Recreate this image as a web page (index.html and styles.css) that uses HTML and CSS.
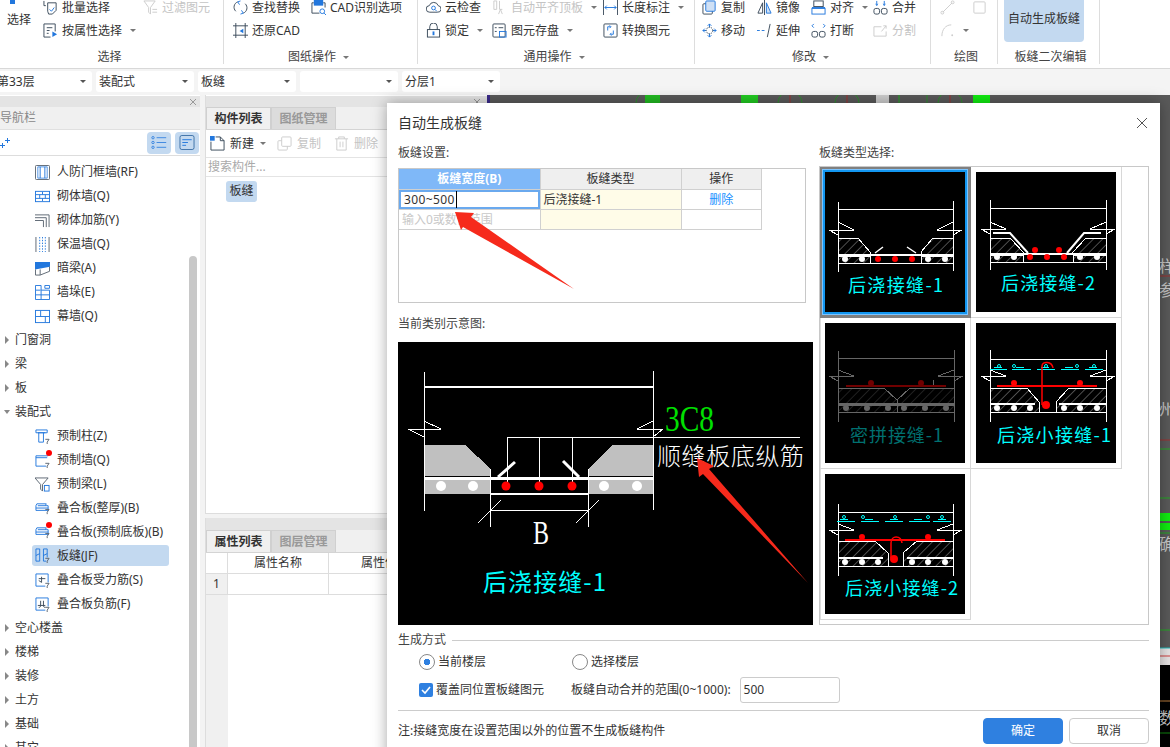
FILE: index.html
```html
<!DOCTYPE html>
<html lang="zh-CN">

<head>
    <meta charset="UTF-8">
    <meta name="viewport" content="width=device-width,initial-scale=1.0">
    <title>自动生成板缝</title>
    <link rel="stylesheet" href="styles.css">
</head>

<body>
    <!-- icon sprite -->
    <svg class="sprite">
        <defs>
            <pattern id="hatch" width="6.500" height="6.500" patternUnits="userSpaceOnUse" patternTransform="rotate(45)">
                <line x1="0" y1="0" x2="0" y2="6.500" stroke="#fff" stroke-width="0.600" />
            </pattern>
            <pattern id="hatch-dim" width="6.500" height="6.500" patternUnits="userSpaceOnUse" patternTransform="rotate(45)">
                <line x1="0" y1="0" x2="0" y2="6.500" stroke="#666" stroke-width="0.600" />
            </pattern>
        </defs>
        <symbol id="i-batch" viewBox="0 0 16 16"><path d="M1 1v5h2M5 3h9v8l-4 4H6l-1-3z" fill="none" stroke="#3a4a5a" /><path d="M7 10l2 2 3-4" fill="none" stroke="#2277dd" /></symbol>
        <symbol id="i-prop" viewBox="0 0 16 16"><path d="M13 9V1H1v14h7" fill="none" stroke="#3a4a5a" /><path d="M4 5h6M4 8h3M4 11h2" stroke="#3a4a5a" /><path d="M10 9l5 3-5 3z" fill="#2277dd" /></symbol>
        <symbol id="i-filter" viewBox="0 0 16 16"><path d="M1 1h12L8 8v7L6 13V8zM10 10h5M10 13h5" fill="none" stroke="#ccc" /></symbol>
        <symbol id="i-find" viewBox="0 0 16 16"><path d="M3 12A6 6 0 0 1 5 2M13 4a6 6 0 0 1-2 10" fill="none" stroke="#3a4a5a" /><path d="M8 1l-3 1 2 3M8 15l3-1-2-3" fill="none" stroke="#2277dd" /></symbol>
        <symbol id="i-cad" viewBox="0 0 16 16"><path d="M1 3v11h8M1 3h2M13 3h2v5" fill="none" stroke="#3a4a5a" /><circle cx="12" cy="12" r="2.5" fill="none" stroke="#2277dd" /><path d="M14 14l2 2" stroke="#2277dd" /><rect x="3" y="0" width="10" height="6" fill="#2277dd" /></symbol>
        <symbol id="i-restore" viewBox="0 0 16 16"><path d="M3 0v16M13 0v16M0 3h16M0 13h16" fill="none" stroke="#3a4a5a" /><path d="M11 6L7 8.500l4 2.500z" fill="#2277dd" /></symbol>
        <symbol id="i-cloud" viewBox="0 0 16 16"><path d="M4 13a3.500 3.500 0 0 1-.5-7A5 5 0 0 1 13 6a3.500 3.500 0 0 1-1 7z" fill="none" stroke="#3a4a5a" /><circle cx="8" cy="8.500" r="2" fill="none" stroke="#2277dd" /><path d="M9.500 10l2 2" stroke="#2277dd" /></symbol>
        <symbol id="i-lock" viewBox="0 0 16 16"><path d="M4 7V4a4 4 0 0 1 8 0v3" fill="none" stroke="#3a4a5a" /><rect x="1.500" y="7" width="13" height="8" fill="none" stroke="#3a4a5a" /><rect x="7" y="9" width="2" height="4" fill="#2277dd" /></symbol>
        <symbol id="i-flat" viewBox="0 0 16 16"><path d="M2 1v9h3V1zM8 1v9h3" fill="none" stroke="#ccc" /><path d="M7 15l2-5 2 5" fill="none" stroke="#ccc" /></symbol>
        <symbol id="i-save" viewBox="0 0 16 16"><rect x="1" y="1" width="13" height="14" rx="1" fill="none" stroke="#3a4a5a" /><path d="M3 5h2M3 9h2M7 5h5" stroke="#3a4a5a" /><rect x="8" y="9" width="7" height="6" fill="none" stroke="#2277dd" /></symbol>
        <symbol id="i-len" viewBox="0 0 16 16"><path d="M.5 0v16M15.500 0v16" stroke="#3a4a5a" /><path d="M2 8h12M4 6L2 8l2 2M12 6l2 2-2 2" fill="none" stroke="#2277dd" /></symbol>
        <symbol id="i-conv" viewBox="0 0 16 16"><rect x="1" y="1" width="14" height="14" rx="1" fill="none" stroke="#3a4a5a" /><path d="M5 8V4h3M11 8v4H8M7 2.500L8.500 4 7 5.500M9 10.500L7.500 12 9 13.500" fill="none" stroke="#2277dd" /></symbol>
        <symbol id="i-copy" viewBox="0 0 16 16"><rect x="1" y="4" width="10" height="11" rx="1" fill="none" stroke="#3a4a5a" /><rect x="4" y="1" width="10" height="11" rx="1" fill="#cfe0f5" stroke="#2277dd" /></symbol>
        <symbol id="i-mirror" viewBox="0 0 16 16"><path d="M8 0v16" stroke="#3a4a5a" /><path d="M6 3v11H1z" fill="none" stroke="#3a4a5a" /><path d="M10 3v11h5z" fill="#cfe0f5" stroke="#2277dd" /></symbol>
        <symbol id="i-align" viewBox="0 0 16 16"><rect x="3" y="1" width="10" height="6" fill="none" stroke="#3a4a5a" /><rect x="1" y="9" width="14" height="6" fill="none" stroke="#2277dd" /><path d="M1 8h14" stroke="#2277dd" /></symbol>
        <symbol id="i-merge" viewBox="0 0 16 16"><rect x="1" y="9" width="6" height="6" rx="2" fill="none" stroke="#3a4a5a" /><rect x="9" y="9" width="6" height="6" rx="2" fill="none" stroke="#3a4a5a" /><path d="M4 1v4M12 1v4M3 4l1 2 1-2M11 4l1 2 1-2" fill="none" stroke="#2277dd" /></symbol>
        <symbol id="i-move" viewBox="0 0 16 16"><path d="M8 1v14M1 8h14M6 3l2-2 2 2M6 13l2 2 2-2M3 6L1 8l2 2M13 6l2 2-2 2" fill="none" stroke="#2277dd" /><circle cx="8" cy="8" r="3.500" fill="#fff" stroke="#3a4a5a" stroke-dasharray="1.500 1" /></symbol>
        <symbol id="i-extend" viewBox="0 0 16 16"><path d="M0 8h3M5 8h3" stroke="#2277dd" /><path d="M11 15l3-14" stroke="#3a4a5a" /></symbol>
        <symbol id="i-break" viewBox="0 0 16 16"><rect x="1" y="9" width="6" height="6" rx="2" fill="none" stroke="#3a4a5a" /><rect x="9" y="9" width="6" height="6" rx="2" fill="none" stroke="#3a4a5a" /><path d="M3 1L1 3l2 2M13 1l2 2-2 2" fill="none" stroke="#2277dd" /></symbol>
        <symbol id="i-split" viewBox="0 0 16 16"><path d="M14 9v5H1V4h8M9 9l5-6M11 3h3v3" fill="none" stroke="#ccc" /></symbol>
        <symbol id="i-line" viewBox="0 0 16 16"><path d="M3 13L13 3" stroke="#ccc" /><circle cx="2.500" cy="13.500" r="1.500" fill="none" stroke="#ccc" /><circle cx="13.500" cy="2.500" r="1.500" fill="none" stroke="#ccc" /></symbol>
        <symbol id="i-rect" viewBox="0 0 16 16"><rect x="2" y="2" width="12" height="12" rx="1" fill="none" stroke="#ccc" /></symbol>
        <symbol id="i-arc" viewBox="0 0 16 16"><path d="M2 14C2 7 6 2 12 2" fill="none" stroke="#ccc" /><circle cx="13" cy="13" r="1" fill="#ccc" /></symbol>
        <symbol id="i-x" viewBox="0 0 8 8"><path d="M1 1l6 6M7 1L1 7" stroke="#999" /></symbol>
        <symbol id="i-plus" viewBox="0 0 10 12"><path d="M0 8.500h5M2.500 6v5M5 3.500h5M7.500 1v5" stroke="#2277dd" /></symbol>
        <symbol id="i-list" viewBox="0 0 20 16"><path d="M7 2h12M7 8h12M7 14h12" stroke="#2277dd" /><circle cx="2.500" cy="2" r="1.500" fill="none" stroke="#2277dd" /><circle cx="2.500" cy="8" r="1.500" fill="none" stroke="#2277dd" /><circle cx="2.500" cy="14" r="1.500" fill="none" stroke="#2277dd" /></symbol>
        <symbol id="i-form" viewBox="0 0 16 16"><rect x=".5" y=".5" width="15" height="15" rx="2" fill="none" stroke="#3a6ea5" /><path d="M3 5h10M3 8h6M3 11h4" stroke="#2277dd" /></symbol>
        <symbol id="n-rf" viewBox="0 0 16 16"><rect x=".5" y=".5" width="15" height="15" rx="1" fill="none" stroke="#5a6470" /><path d="M5.500 2v12M10.500 2v12" stroke="#2277dd" /><path d="M3 2h10v12H3z" fill="none" stroke="#2277dd" stroke-width=".8" /></symbol>
        <symbol id="n-brick" viewBox="0 0 16 16"><rect x=".5" y="2.500" width="15" height="11" fill="none" stroke="#2277dd" /><path d="M1 6h14M1 10h14M8 3v3M5 6v4M11 6v4M8 10v3" stroke="#2277dd" /></symbol>
        <symbol id="n-rebar" viewBox="0 0 16 16"><path d="M0 2h15v13M0 5h12v10M0 8h9v7" fill="none" stroke="#5a6470" /></symbol>
        <symbol id="n-ins" viewBox="0 0 16 16"><path d="M1 0v16M15 0v16" stroke="#5a6470" /><path d="M5 0v16M8 0v16M11 0v16" stroke="#2277dd" stroke-dasharray="1.500 1.500" /></symbol>
        <symbol id="n-beam" viewBox="0 0 16 16"><path d="M0 1h16v5L0 9z" fill="#2277dd" /><path d="M.5 9v6h5l10-4V6M5.500 9v6" fill="none" stroke="#5a6470" /></symbol>
        <symbol id="n-pier" viewBox="0 0 16 16"><path d="M.5.500h6v5h9v10H.5zM1 5.500h5M.5 10.500h15M6.500 5.500v10M10.500.500h5v3h-5z" fill="none" stroke="#2277dd" /></symbol>
        <symbol id="n-curt" viewBox="0 0 16 16"><rect x=".5" y="1.500" width="15" height="13" fill="none" stroke="#2277dd" /><path d="M1 8h14M6 2v6M11 8v6" stroke="#2277dd" /></symbol>
        <symbol id="n-col" viewBox="0 0 16 16"><path d="M1 1h12v3H1zM3 4h8M4 4v10h5V4" fill="none" stroke="#2277dd" /><path d="M11 11h4l-2 3v2" fill="none" stroke="#5a6470" /></symbol>
        <symbol id="n-wall" viewBox="0 0 16 16"><path d="M12 14H1V3h13" fill="none" stroke="#2277dd" /><path d="M1 5h12" stroke="#2277dd" /><path d="M11 11h4l-2 3v2" fill="none" stroke="#5a6470" /></symbol>
        <symbol id="n-gbeam" viewBox="0 0 16 16"><path d="M0 1h14L8 8v7L6 13V8z" fill="none" stroke="#5a6470" /><rect x="10" y="9" width="5" height="6" fill="none" stroke="#2277dd" /></symbol>
        <symbol id="n-slab" viewBox="0 0 16 16"><path d="M2 3h10l-1 2h3v5H1V5zM1 7.500h13M3 5h8" fill="none" stroke="#2277dd" /><path d="M11 9h4l-2 3v2" fill="none" stroke="#5a6470" /></symbol>
        <symbol id="n-joint" viewBox="0 0 16 16"><path d="M5 1H1v13h4M5 1v13M9 1h4v9M9 1v13h3" fill="none" stroke="#2277dd" /><path d="M1 8l4-2M9 8l4-2" stroke="#2277dd" /><path d="M11 11h4l-2 3v2" fill="none" stroke="#5a6470" /></symbol>
        <symbol id="n-force" viewBox="0 0 16 16"><path d="M14 10V1H1v13h10" fill="none" stroke="#2277dd" /><path d="M4 6h7M7 4v6M4 8l3 2" fill="none" stroke="#3a4a5a" /><path d="M11 11h4l-2 3v2" fill="none" stroke="#5a6470" /></symbol>
        <symbol id="n-neg" viewBox="0 0 16 16"><path d="M14 10V1H1v13h10" fill="none" stroke="#2277dd" /><path d="M3 9h8M6 4v5c0 2-1 2-2 2M9 4v5c0 2 1 2 2 2" fill="none" stroke="#3a4a5a" /><path d="M11 11h4l-2 3v2" fill="none" stroke="#5a6470" /></symbol>
        <symbol id="i-new" viewBox="0 0 16 16"><path d="M1 6v9h14V5l-4-4H6" fill="none" stroke="#3a4a5a" /><path d="M11 1v4h4" fill="none" stroke="#3a4a5a" /><rect x="0" y="0" width="5" height="5" fill="#2277dd" /></symbol>
        <symbol id="i-copy-off" viewBox="0 0 16 16"><rect x="1" y="5" width="10" height="10" rx="1" fill="none" stroke="#ccc" /><rect x="5" y="1" width="10" height="10" rx="1" fill="#fff" stroke="#ccc" /></symbol>
        <symbol id="i-del-off" viewBox="0 0 16 16"><path d="M1 3h14M5 3V1h6v2M3 3v12h10V3M6.500 6v6M9.500 6v6" fill="none" stroke="#ccc" /></symbol>
    </svg>

    <div class="page">
        <!-- ribbon -->
        <div class="ribbon">
            <div class="group group-select">
                <div class="tools">
                    <div class="big-select"><i class="pick-mark"></i>选择</div>
                    <div class="tool"><svg class="ic"><use href="#i-batch" /></svg><span>批量选择</span></div>
                    <div class="tool off"><svg class="ic"><use href="#i-filter" /></svg><span>过滤图元</span></div>
                    <div class="tool"><svg class="ic"><use href="#i-prop" /></svg><span>按属性选择</span><i class="caret"></i></div>
                </div>
                <div class="group-label">选择</div>
            </div>
            <div class="group group-paper">
                <div class="tools">
                    <div class="tool"><svg class="ic"><use href="#i-find" /></svg><span>查找替换</span></div>
                    <div class="tool"><svg class="ic"><use href="#i-cad" /></svg><span>CAD识别选项</span></div>
                    <div class="tool"><svg class="ic"><use href="#i-restore" /></svg><span>还原CAD</span></div>
                </div>
                <div class="group-label">图纸操作<i class="caret"></i></div>
            </div>
            <div class="group group-common">
                <div class="tools">
                    <div class="tool"><svg class="ic"><use href="#i-cloud" /></svg><span>云检查</span></div>
                    <div class="tool off"><svg class="ic"><use href="#i-flat" /></svg><span>自动平齐顶板</span><i class="caret"></i></div>
                    <div class="tool"><svg class="ic"><use href="#i-len" /></svg><span>长度标注</span><i class="caret"></i></div>
                    <div class="tool"><svg class="ic"><use href="#i-lock" /></svg><span>锁定</span><i class="caret"></i></div>
                    <div class="tool"><svg class="ic"><use href="#i-save" /></svg><span>图元存盘</span><i class="caret"></i></div>
                    <div class="tool"><svg class="ic"><use href="#i-conv" /></svg><span>转换图元</span></div>
                </div>
                <div class="group-label">通用操作<i class="caret"></i></div>
            </div>
            <div class="group group-modify">
                <div class="tools">
                    <div class="tool"><svg class="ic"><use href="#i-copy" /></svg><span>复制</span></div>
                    <div class="tool"><svg class="ic"><use href="#i-mirror" /></svg><span>镜像</span></div>
                    <div class="tool"><svg class="ic"><use href="#i-align" /></svg><span>对齐</span><i class="caret"></i></div>
                    <div class="tool"><svg class="ic"><use href="#i-merge" /></svg><span>合并</span></div>
                    <div class="tool"><svg class="ic"><use href="#i-move" /></svg><span>移动</span></div>
                    <div class="tool"><svg class="ic"><use href="#i-extend" /></svg><span>延伸</span></div>
                    <div class="tool"><svg class="ic"><use href="#i-break" /></svg><span>打断</span></div>
                    <div class="tool off"><svg class="ic"><use href="#i-split" /></svg><span>分割</span></div>
                </div>
                <div class="group-label">修改<i class="caret"></i></div>
            </div>
            <div class="group group-draw">
                <div class="tools">
                    <div class="tool"><svg class="ic"><use href="#i-line" /></svg></div>
                    <div class="tool"><svg class="ic"><use href="#i-rect" /></svg></div>
                    <div class="tool"><svg class="ic"><use href="#i-arc" /></svg><i class="caret"></i></div>
                </div>
                <div class="group-label">绘图</div>
            </div>
            <div class="group group-edit">
                <div class="auto-btn">自动生成板缝</div>
                <div class="group-label">板缝二次编辑</div>
            </div>
        </div>

        <!-- 楼层 / 构件 selectors -->
        <div class="selectors">
            <div class="select first">第33层<i class="caret"></i></div>
            <div class="select">装配式<i class="caret"></i></div>
            <div class="select">板缝<i class="caret"></i></div>
            <div class="select"><i class="caret"></i></div>
            <div class="select">分层1<i class="caret"></i></div>
        </div>

        <div class="workspace">
            <!-- navigation -->
            <div class="nav">
                <div class="strip"><svg class="strip-x"><use href="#i-x" /></svg></div>
                <div class="nav-title">导航栏</div>
                <div class="nav-tools">
                    <svg class="plus"><use href="#i-plus" /></svg>
                    <span class="nav-btn"><svg class="nav-btn-ic"><use href="#i-list" /></svg></span>
                    <span class="nav-btn"><svg class="nav-btn-ic"><use href="#i-form" /></svg></span>
                </div>
                <div class="tree">
                    <div class="leaf"><svg class="ic"><use href="#n-rf" /></svg>人防门框墙(RF)</div>
                    <div class="leaf"><svg class="ic"><use href="#n-brick" /></svg>砌体墙(Q)</div>
                    <div class="leaf"><svg class="ic"><use href="#n-rebar" /></svg>砌体加筋(Y)</div>
                    <div class="leaf"><svg class="ic"><use href="#n-ins" /></svg>保温墙(Q)</div>
                    <div class="leaf"><svg class="ic"><use href="#n-beam" /></svg>暗梁(A)</div>
                    <div class="leaf"><svg class="ic"><use href="#n-pier" /></svg>墙垛(E)</div>
                    <div class="leaf"><svg class="ic"><use href="#n-curt" /></svg>幕墙(Q)</div>
                    <div class="branch"><i class="arrow"></i>门窗洞</div>
                    <div class="branch"><i class="arrow"></i>梁</div>
                    <div class="branch"><i class="arrow"></i>板</div>
                    <div class="branch"><i class="arrow open"></i>装配式</div>
                    <div class="leaf"><svg class="ic"><use href="#n-col" /></svg>预制柱(Z)</div>
                    <div class="leaf"><span class="ic-wrap"><svg class="ic"><use href="#n-wall" /></svg><i class="dot"></i></span>预制墙(Q)</div>
                    <div class="leaf"><svg class="ic"><use href="#n-gbeam" /></svg>预制梁(L)</div>
                    <div class="leaf"><svg class="ic"><use href="#n-slab" /></svg>叠合板(整厚)(B)</div>
                    <div class="leaf"><span class="ic-wrap"><svg class="ic"><use href="#n-slab" /></svg><i class="dot"></i></span>叠合板(预制底板)(B)</div>
                    <div class="leaf on"><svg class="ic"><use href="#n-joint" /></svg>板缝(JF)</div>
                    <div class="leaf"><svg class="ic"><use href="#n-force" /></svg>叠合板受力筋(S)</div>
                    <div class="leaf"><svg class="ic"><use href="#n-neg" /></svg>叠合板负筋(F)</div>
                    <div class="branch"><i class="arrow"></i>空心楼盖</div>
                    <div class="branch"><i class="arrow"></i>楼梯</div>
                    <div class="branch"><i class="arrow"></i>装修</div>
                    <div class="branch"><i class="arrow"></i>土方</div>
                    <div class="branch"><i class="arrow"></i>基础</div>
                    <div class="branch"><i class="arrow"></i>其它</div>
                </div>
                <div class="scroll-thumb"></div>
            </div>

            <!-- component list + properties -->
            <div class="side">
                <div class="list-panel">
                    <div class="strip"><svg class="strip-x"><use href="#i-x" /></svg></div>
                    <div class="tabs">
                        <span class="tab active">构件列表</span>
                        <span class="tab">图纸管理</span>
                    </div>
                    <div class="list-tools">
                        <span class="list-tool"><svg class="ic"><use href="#i-new" /></svg>新建<i class="caret"></i></span>
                        <span class="list-tool off"><svg class="ic"><use href="#i-copy-off" /></svg>复制</span>
                        <span class="list-tool off"><svg class="ic"><use href="#i-del-off" /></svg>删除</span>
                    </div>
                    <div class="search">搜索构件...</div>
                    <div class="chip">板缝</div>
                </div>
                <div class="prop-panel">
                    <div class="strip"></div>
                    <div class="tabs">
                        <span class="tab active">属性列表</span>
                        <span class="tab">图层管理</span>
                    </div>
                    <div class="prop-row head"><span class="num"></span><span class="name">属性名称</span><span class="val">属性值</span></div>
                    <div class="prop-row"><span class="num">1</span><span class="name"></span><span class="val"></span></div>
                    <div class="prop-rest"></div>
                </div>
            </div>

            <!-- drawing area behind the dialog -->
            <svg class="canvas" viewBox="487 95 683 652">
                <rect x="487" y="95" width="683" height="652" fill="#5a5a5a" />
                <rect x="487" y="95" width="3" height="8" fill="#3a2a8a" />
                <path d="M636 103a12 12 0 0 1 24 0M778 103a12 12 0 0 1 24 0M835 103a12 12 0 0 1 24 0M927 103v-8M938 103a12 12 0 0 1 24 0" fill="none" stroke="#2f8f2f" />
                <path d="M648 95v8M790 95v8M847 95v8M950 95v8" stroke="#a03030" />
                <rect x="645" y="95" width="15" height="8" fill="#22bb22" />
                <rect x="741" y="95" width="17" height="8" fill="#22cc22" />
                <rect x="876" y="95" width="13" height="8" fill="#cfcfcf" />
                <path d="M899 95v8" stroke="#22aa22" />
                <rect x="973" y="95" width="17" height="8" fill="#11ee11" />
                <path d="M1160 276h10M1160 440h10" stroke="#a03030" />
                <path d="M1160 449h10M1160 498h10M1160 533h10M1160 630h10" stroke="#22aa22" />
                <rect x="1160" y="513" width="10" height="8" fill="#11ee11" />
                <rect x="1160" y="523" width="10" height="7" fill="#11ee11" />
                <text class="canvas-text" x="1159" y="272">样</text>
                <text class="canvas-text" x="1159" y="296">参</text>
                <text class="canvas-text" x="1159" y="415">州</text>
                <text class="canvas-text" x="1159" y="550">确</text>
                <rect x="1160" y="648" width="10" height="17" fill="#e8e4e4" />
                <path d="M1160 648h10" stroke="#20c0c0" />
                <path d="M1160 656h10" stroke="#d04040" />
                <rect x="1160" y="665" width="10" height="82" fill="#000" />
                <path d="M1160 701h10" stroke="#c08040" />
                <path d="M1160 733h10" stroke="#118811" />
                <text class="canvas-text" x="1159" y="724">数</text>
            </svg>
        </div>

        <!-- dialog -->
        <div class="dialog">
            <div class="dialog-title">自动生成板缝<span class="dialog-close"><svg class="close-ic" viewBox="0 0 12 12"><path d="M1 1l10 10M11 1L1 11" stroke="#555" fill="none" /></svg></span></div>
            <div class="dialog-body">
                <div class="col-left">
                    <div class="field-label">板缝设置:</div>
                    <div class="joint-box">
                        <table class="joint-table">
                            <tr>
                                <th class="cur">板缝宽度(B)</th>
                                <th>板缝类型</th>
                                <th>操作</th>
                            </tr>
                            <tr>
                                <td class="editing"><span class="caret-text">300~500</span></td>
                                <td class="pale">后浇接缝-1</td>
                                <td class="link">删除</td>
                            </tr>
                            <tr>
                                <td class="hint">输入0或数值范围</td>
                                <td class="pale"></td>
                                <td></td>
                            </tr>
                        </table>
                    </div>
                    <div class="field-label second">当前类别示意图:</div>
                    <svg class="preview" viewBox="0 0 415 283">
                        <rect width="415" height="283" fill="#000" />
                        <g fill="#c0c0c0">
                            <path d="M26 103h41l26 24v7H26zM255 103h-41l-24 24v7h65z" />
                            <rect x="26" y="138" width="67" height="14" />
                            <rect x="190" y="138" width="65" height="14" />
                        </g>
                        <g stroke="#fff" fill="none">
                            <path d="M26 30v139M255 29v139" />
                            <path d="M26 45h229" stroke-width="2" />
                            <path d="M26 79l17 8H10l16 8M255 79l-16 8h26l-10 8" />
                            <path d="M26 136h229" stroke-width="3" />
                            <path d="M93 152h97" stroke-width="2" />
                            <path d="M92.500 127v58M190.500 127v58" />
                            <path d="M92 168h98M80 181l23-23M178 181l23-23" />
                            <path d="M109 144V95h293M141 95v49M174 95v49" />
                            <path class="soft" d="M100 135l17-15M181 135l-16-16" stroke-width="3" />
                        </g>
                        <g fill="#fff">
                            <circle cx="43" cy="144" r="5" />
                            <circle cx="75" cy="144" r="5" />
                            <circle cx="206" cy="144" r="5" />
                            <circle cx="239" cy="144" r="5" />
                        </g>
                        <g fill="#f00">
                            <circle cx="108" cy="144" r="4.500" />
                            <circle cx="141" cy="144" r="4.500" />
                            <circle cx="174" cy="144" r="4.500" />
                        </g>
                        <text class="serif" x="135" y="202" font-size="33" fill="#fff" textLength="16" lengthAdjust="spacingAndGlyphs">B</text>
                        <text class="serif" x="267" y="89" font-size="35" fill="#00e000" textLength="49" lengthAdjust="spacingAndGlyphs">3C8</text>
                        <text class="thin" x="259" y="123" font-size="24" fill="#fff" textLength="147">顺缝板底纵筋</text>
                        <text class="cad" x="85" y="249" font-size="24" textLength="123">后浇接缝-1</text>
                    </svg>
                </div>
                <div class="col-right">
                    <div class="field-label">板缝类型选择:</div>
                    <div class="tile-box">
                        <div class="tile-grid">
                            <div class="tile selected">
                                <svg class="thumb" viewBox="0 0 140 140">
                                    <rect width="140" height="140" fill="#000" />
                                    <path d="M13 66h20l12 14v3H13zM128 66h-20l-12 14v3h32zM13 84h32v7H13zM96 84h32v7H96z" fill="url(#hatch)" stroke="#fff" />
                                    <g stroke="#fff" fill="none">
                                        <path d="M13 30v70M128 29v70M13 37h115M13 91h115" />
                                        <path d="M13 50l16 8H4l9 5M128 50l-16 8h25l-9 5" />
                                        <path d="M13 83h115" stroke-width="2" />
                                        <path d="M45 80v11M96 80v11" />
                                        <path class="soft" d="M50 81l8-6M91 81l-9-6" stroke-width="1.500" />
                                    </g>
                                    <g fill="#fff"><circle cx="20" cy="87" r="3" /><circle cx="37" cy="87" r="3" /><circle cx="103" cy="87" r="3" /><circle cx="120" cy="87" r="3" /></g>
                                    <g fill="#f00"><circle cx="53" cy="87" r="3" /><circle cx="70" cy="87" r="3" /><circle cx="87" cy="87" r="3" /></g>
                                    <text class="cad" x="23" y="120" font-size="18" textLength="95">后浇接缝-1</text>
                                </svg>
                            </div>
                            <div class="tile">
                                <svg class="thumb" viewBox="0 0 140 140">
                                    <rect width="140" height="140" fill="#000" />
                                    <path d="M14 66h20l14 15H14zM130 66h-20l-14 15h34zM14 83h33v7H14zM97 83h33v7H97z" fill="url(#hatch)" stroke="#fff" />
                                    <g stroke="#fff" fill="none">
                                        <path d="M14 28v70M130 28v70M14 36h116M14 90h116" />
                                        <path d="M14 50l16 7H5l9 5M130 50l-16 7h25l-9 5" />
                                        <path d="M14 82h116" stroke-width="2" />
                                        <path class="soft" d="M17 61h17l18 20M125 61h-17L91 81" stroke-width="2" />
                                        <path d="M47 82v8M97 82v8" />
                                    </g>
                                    <g fill="#fff"><circle cx="21" cy="85" r="3" /><circle cx="38" cy="85" r="3" /><circle cx="104" cy="85" r="3" /><circle cx="121" cy="85" r="3" /></g>
                                    <g fill="#f00"><circle cx="54" cy="85" r="3" /><circle cx="71" cy="85" r="3" /><circle cx="88" cy="85" r="3" /><circle cx="59" cy="78" r="3" /><circle cx="83" cy="78" r="3" /></g>
                                    <text class="cad" x="25" y="118" font-size="18" textLength="94">后浇接缝-2</text>
                                </svg>
                            </div>
                            <div class="tile">
                                <svg class="thumb" viewBox="0 0 140 140">
                                    <rect width="140" height="140" fill="#000" />
                                    <path d="M13 65h46l13 12v4H13zM129 65H85l-13 12v4h57zM13 82h59v7H13zM72 82h57v7H72z" fill="url(#hatch-dim)" stroke="#666" />
                                    <g stroke="#666" fill="none">
                                        <path d="M13 28v71M129 27v72M13 35h116M13 89h116" />
                                        <path d="M13 47l16 6H4l9 5M129 47l-16 6h25l-9 5" />
                                        <path d="M13 81h116" stroke-width="2" />
                                        <path d="M108 57v6" />
                                    </g>
                                    <path d="M21 63h100" stroke="#700000" stroke-width="2" />
                                    <g fill="#700000"><circle cx="46" cy="60" r="3" /><circle cx="96" cy="60" r="3" /></g>
                                    <g fill="#666"><circle cx="21" cy="85" r="3" /><circle cx="42" cy="85" r="3" /><circle cx="63" cy="85" r="3" /><circle cx="79" cy="85" r="3" /><circle cx="100" cy="85" r="3" /><circle cx="121" cy="85" r="3" /></g>
                                    <text class="cad dim" x="25" y="119" font-size="18" textLength="93">密拼接缝-1</text>
                                </svg>
                            </div>
                            <div class="tile">
                                <svg class="thumb" viewBox="0 0 140 140">
                                    <rect width="140" height="140" fill="#000" />
                                    <path d="M14 65h37l12 14v10H14zM130 65H93L80 79v10h50z" fill="url(#hatch)" stroke="#fff" />
                                    <g stroke="#fff" fill="none">
                                        <path d="M14 27v72M130 27v72M14 36h116M14 89h116" />
                                        <path d="M14 47l16 6H5l9 5M130 47l-16 6h25l-9 5" />
                                        <path d="M14 81h45M83 81h47" stroke-width="2" />
                                    </g>
                                    <path d="M14 46h17M36 46h19M61 46h18M85 46h18M109 46h18M18 44h8M40 44h8M65 44h8M89 44h8M113 44h8" stroke="#0ff" />
                                    <g fill="none" stroke="#0ff"><circle cx="23" cy="43" r="1.500" /><circle cx="38" cy="43" r="1.500" /><circle cx="70" cy="43" r="1.500" /><circle cx="101" cy="43" r="1.500" /><circle cx="118" cy="43" r="1.500" /></g>
                                    <g fill="#fff"><circle cx="21" cy="85" r="3" /><circle cx="38" cy="85" r="3" /><circle cx="54" cy="85" r="3" /><circle cx="88" cy="85" r="3" /><circle cx="104" cy="85" r="3" /><circle cx="121" cy="85" r="3" /></g>
                                    <path d="M21 63h100" stroke="#f00" stroke-width="2" />
                                    <path class="soft" d="M66 82V43c0-5 10-5 11 2" stroke="#f00" stroke-width="1.500" fill="none" />
                                    <g fill="#f00"><circle cx="38" cy="60" r="3" /><circle cx="104" cy="60" r="3" /><circle cx="70" cy="82" r="4" /></g>
                                    <text class="cad" x="21" y="119" font-size="18" textLength="114">后浇小接缝-1</text>
                                </svg>
                            </div>
                            <div class="tile">
                                <svg class="thumb" viewBox="0 0 140 140">
                                    <rect width="140" height="140" fill="#000" />
                                    <path d="M13 67h37l13 12v13H13zM128 67H92L78 79v13h50z" fill="url(#hatch)" stroke="#fff" />
                                    <g stroke="#fff" fill="none">
                                        <path d="M13 30v72M128 30v72M13 38h115M13 92h115" />
                                        <path d="M13 50l16 6H4l9 5M128 50l-16 6h25l-9 5" />
                                        <path d="M13 84h45M82 84h46" stroke-width="2" />
                                    </g>
                                    <path d="M12 47h18M36 47h18M60 47h18M84 47h21M108 47h18M15 45h8M40 45h8M65 45h8M89 45h8M113 45h8" stroke="#0ff" />
                                    <g fill="none" stroke="#0ff"><circle cx="19" cy="43" r="1.500" /><circle cx="38" cy="43" r="1.500" /><circle cx="70" cy="43" r="1.500" /><circle cx="103" cy="43" r="1.500" /><circle cx="117" cy="43" r="1.500" /></g>
                                    <g fill="#fff"><circle cx="20" cy="88" r="3" /><circle cx="37" cy="88" r="3" /><circle cx="53" cy="88" r="3" /><circle cx="87" cy="88" r="3" /><circle cx="103" cy="88" r="3" /><circle cx="120" cy="88" r="3" /></g>
                                    <path d="M20 66h100" stroke="#f00" stroke-width="2" />
                                    <path class="soft" d="M77 69c-1-8-11-8-11 0v15" stroke="#f00" stroke-width="1.500" fill="none" />
                                    <g fill="#f00"><circle cx="37" cy="63" r="3" /><circle cx="103" cy="63" r="3" /><circle cx="69" cy="85" r="4" /></g>
                                    <text class="cad" x="20" y="121" font-size="18" textLength="113">后浇小接缝-2</text>
                                </svg>
                            </div>
                        </div>
                    </div>
                </div>
            </div>

            <div class="gen-title">生成方式</div>
            <div class="gen-row radios">
                <label class="radio checked">当前楼层</label>
                <label class="radio">选择楼层</label>
            </div>
            <div class="gen-row options">
                <label class="check"><svg class="check-ic" viewBox="0 0 14 14"><rect width="14" height="14" rx="2" fill="#2f80e0" /><path d="M3 7l3 3 5-6" stroke="#fff" stroke-width="1.600" fill="none" /></svg>覆盖同位置板缝图元</label>
                <span class="range">板缝自动合并的范围(0~1000):<span class="range-input">500</span></span>
            </div>
            <div class="dialog-foot">
                <span class="note">注:接缝宽度在设置范围以外的位置不生成板缝构件</span>
                <button class="btn primary">确定</button>
                <button class="btn">取消</button>
            </div>
        </div>

        <!-- red annotation arrows -->
        <svg class="marks" viewBox="0 0 1170 747">
            <path d="M455 212l19 1-3 4 103 72-111-62-2 3z" fill="#f62a1c" />
            <path d="M697 458l17 8-5 3 99 114-105-109-4 3z" fill="#f62a1c" />
        </svg>
    </div>
</body>

</html>
```

FILE: styles.css
```css
/* Reset */
* {
    margin: 0;
    padding: 0;
    box-sizing: border-box;
}

html,
body {
    width: 1170px;
    height: 747px;
    overflow: hidden;
    background-color: #fff;
    font-family: "Noto Sans", "Noto Sans CJK SC", sans-serif;
    font-size: 12px;
    line-height: 18px;
    color: #333;
}

.sprite {
    display: block;
    width: 0;
    height: 0;
}

.page {
    position: relative;
    width: 1170px;
    height: 747px;
    overflow: hidden;
}

.ic {
    width: 15px;
    height: 15px;
    flex: none;
}

.caret {
    display: inline-block;
    width: 0;
    height: 0;
    margin-left: 6px;
    border-left: 3px solid transparent;
    border-right: 3px solid transparent;
    border-top: 3px solid #777;
    vertical-align: middle;
}

/* Ribbon */
.ribbon {
    display: flex;
    height: 69px;
    background-color: #fff;
    border-bottom: 1px solid #d8d8d8;
    overflow: hidden;
}

.group {
    display: flex;
    flex-direction: column;
    justify-content: space-between;
    height: 64px;
    border-right: 1px solid #ddd;
}

.tools {
    display: grid;
    grid-auto-rows: 23px;
    margin-top: -4px;
}

.group-label {
    height: 18px;
    margin-bottom: -2px;
    padding-right: 4px;
    text-align: center;
    color: #444;
}

.group-label .caret {
    margin-left: 7px;
}

.tool {
    display: flex;
    align-items: center;
    gap: 4px;
    white-space: nowrap;
}

.tool .caret {
    margin-left: 4px;
}

.tool.off {
    color: #c4c4c4;
}

.group-select {
    width: 224px;
}

.group-select .tools {
    grid-template-columns: 43px 100px 80px;
}

.big-select {
    position: relative;
    grid-row: span 2;
    padding: 15px 0 0 7px;
}

.pick-mark {
    position: absolute;
    left: 10px;
    top: 3px;
    width: 5px;
    height: 5px;
    background-color: #2277dd;
}

.group-paper {
    width: 194px;
}

.group-paper .tools {
    grid-template-columns: 78px 100px;
    padding-left: 9px;
}

.group-common {
    width: 277px;
}

.group-common .tools {
    grid-template-columns: 66px 111px 90px;
    padding-left: 8px;
}

.group-modify {
    width: 236px;
}

.group-modify .tools {
    grid-template-columns: 55px 54px 62px 50px;
    padding-left: 7px;
}

.group-draw {
    width: 67px;
}

.group-draw .tools {
    grid-template-columns: 32px 20px;
    padding-left: 9px;
}

.group-draw .group-label {
    padding: 0 0 0 4px;
}

.group-edit {
    width: 102px;
}

.group-edit .group-label {
    padding: 0 0 0 4px;
}

.auto-btn {
    width: 80px;
    height: 42px;
    margin-left: 6px;
    padding-top: 10px;
    background-color: #c3d9f0;
    border-radius: 0 0 4px 4px;
    text-align: center;
    white-space: nowrap;
}

/* Selectors */
.selectors {
    display: flex;
    gap: 4px;
    height: 26px;
    margin-left: -6px;
    padding-top: 2px;
    background-color: #f4f4f4;
    width: 1176px;
}

.select {
    position: relative;
    width: 98px;
    height: 21px;
    padding: 2px 3px 0;
    background-color: #fff;
    border-radius: 3px;
    white-space: nowrap;
}

.select .caret {
    position: absolute;
    right: 6px;
    top: 9px;
    border-top-color: #555;
}

/* Workspace */
.workspace {
    display: flex;
    height: 652px;
    background-color: #f3f3f3;
}

.strip {
    position: relative;
    height: 11px;
    margin-top: 1px;
    background-color: #e4e4e4;
}

.strip-x {
    position: absolute;
    right: 3px;
    top: 2px;
    width: 8px;
    height: 8px;
}

.nav {
    position: relative;
    width: 200px;
    background-color: #fff;
    overflow: hidden;
}

.nav-title {
    height: 23px;
    padding-top: 2px;
    background-color: #f0f0f0;
    color: #888;
    border-bottom: 1px solid #e0e0e0;
}

.nav-tools {
    display: flex;
    align-items: center;
    gap: 4px;
    height: 26px;
    padding-right: 1px;
    border-bottom: 1px solid #ddd;
}

.plus {
    width: 10px;
    height: 12px;
    margin-right: auto;
}

.nav-btn {
    display: flex;
    align-items: center;
    justify-content: center;
    width: 24px;
    height: 22px;
    background-color: #c3d9f0;
    border-radius: 4px;
}

.nav-btn-ic {
    width: 16px;
    height: 15px;
}

.tree {
    padding-top: 4px;
}

.leaf,
.branch {
    display: flex;
    align-items: center;
    height: 24px;
    white-space: nowrap;
}

.leaf {
    gap: 7px;
    padding-left: 35px;
}

.leaf.on {
    height: 21px;
    width: 137px;
    margin: 1px 0 2px 32px;
    padding-left: 3px;
    background-color: #c3d9f0;
    border-radius: 3px;
}

.branch {
    gap: 6px;
    padding-left: 5px;
}

.arrow {
    width: 0;
    height: 0;
    margin-right: 0;
    border-top: 4px solid transparent;
    border-bottom: 4px solid transparent;
    border-left: 4px solid #888;
}

.arrow.open {
    margin-left: -1px;
    margin-right: -1px;
    border-left: 3px solid transparent;
    border-right: 3px solid transparent;
    border-top: 4px solid #888;
    border-bottom: 0;
}

.ic-wrap {
    position: relative;
    display: flex;
}

.dot {
    position: absolute;
    right: -2px;
    top: -3px;
    width: 6px;
    height: 6px;
    background-color: #f00;
    border-radius: 50%;
}

.scroll-thumb {
    position: absolute;
    left: 189px;
    top: 161px;
    width: 8px;
    height: 500px;
    background-color: #c8c8c8;
    border-radius: 4px;
}

/* Component list / properties */
.side {
    display: flex;
    flex-direction: column;
    gap: 4px;
    width: 282px;
    margin-left: 5px;
}

.list-panel {
    flex: none;
    height: 419px;
    background-color: #fff;
    border-bottom: 1px solid #ddd;
    border-left: 1px solid #ddd;
}

.list-panel .strip-x {
    right: 6px;
}

.prop-panel {
    flex: 1;
    background-color: #fff;
    border-left: 1px solid #ddd;
}

.prop-panel .strip {
    height: 12px;
    margin-top: 0;
}

.tabs {
    display: flex;
    height: 23px;
    background-color: #f0f0f0;
    border-bottom: 1px solid #d4d4d4;
}

.tab {
    width: 65px;
    padding-top: 2px;
    text-align: center;
    font-weight: 700;
    color: #999;
    background-color: #dcdcdc;
    border: 1px solid #d0d0d0;
    border-bottom: 0;
}

.tab.active {
    color: #333;
    background-color: #f0f0f0;
}

.list-tools {
    display: flex;
    align-items: center;
    height: 28px;
    padding-left: 4px;
    border-bottom: 1px solid #e4e4e4;
}

.list-tool {
    display: flex;
    align-items: center;
    gap: 5px;
    margin-right: 13px;
}

.list-tool .caret {
    margin-left: 1px;
    margin-right: -2px;
}

.list-tool.off {
    color: #c4c4c4;
}

.search {
    height: 19px;
    padding-left: 2px;
    color: #aaa;
    border-bottom: 1px solid #e4e4e4;
}

.chip {
    width: 31px;
    height: 21px;
    margin: 4px 0 0 20px;
    padding-top: 1px;
    text-align: center;
    background-color: #c3d9f0;
    border-radius: 3px;
}

.prop-row {
    display: flex;
    height: 21px;
    line-height: 20px;
    border-bottom: 1px solid #ddd;
}

.num {
    width: 22px;
    text-align: center;
    background-color: #f0f0f0;
    border-right: 1px solid #ddd;
}

.name {
    width: 101px;
    text-align: center;
    border-right: 1px solid #ddd;
}

.val {
    flex: 1;
    padding-left: 32px;
}

.prop-row.head .num {
    background-color: #fff;
}

.prop-rest {
    width: 22px;
    height: 160px;
    background-color: #f0f0f0;
}

.canvas {
    display: block;
    flex: 1;
    height: 652px;
}

.canvas-text {
    fill: #c8c8c8;
    font-size: 16px;
}

/* Dialog */
.dialog {
    position: absolute;
    left: 387px;
    top: 103px;
    width: 773px;
    height: 660px;
    padding: 0 11px;
    background-color: #fff;
    box-shadow: 0 0 14px rgba(0, 0, 0, 0.35);
}

.dialog-title {
    display: flex;
    justify-content: space-between;
    align-items: center;
    height: 40px;
    font-size: 14px;
}

.dialog-close {
    display: flex;
    margin-right: 1px;
}

.close-ic {
    width: 12px;
    height: 12px;
}

.dialog-body {
    display: flex;
    gap: 6px;
}

.col-left {
    width: 415px;
}

.col-right {
    width: 330px;
}

.field-label {
    height: 18px;
    line-height: 20px;
    color: #444;
}

.field-label.second {
    margin-top: 11px;
    margin-bottom: 10px;
}

.joint-box {
    width: 408px;
    height: 135px;
    margin-top: 7px;
    border: 1px solid #c8c8c8;
}

.joint-table {
    border-collapse: collapse;
    table-layout: fixed;
    width: 363px;
}

.joint-table th,
.joint-table td {
    height: 20px;
    padding: 1px 3px 0;
    border: 1px solid #d0d0d0;
    font-weight: 400;
    line-height: 16px;
    white-space: nowrap;
    overflow: hidden;
}

.joint-table tr:first-child th {
    border-top: 0;
}

.joint-table tr > :first-child {
    border-left: 0;
}

.joint-table th {
    background-color: #efefef;
    text-align: center;
}

.joint-table th:first-child {
    width: 141px;
}

.joint-table th:nth-child(2) {
    width: 141px;
}

.joint-table th.cur {
    background-color: #7fb8f8;
    color: #fff;
    font-weight: 700;
}

.joint-table td.editing {
    padding-left: 5px;
    letter-spacing: 0.4px;
    box-shadow: inset 0 0 0 2px #6aa9ee;
}

.caret-text {
    padding-right: 1px;
    border-right: 1px solid #000;
}

.joint-table td.pale {
    background-color: #fffce8;
}

.joint-table td.link {
    text-align: center;
    color: #1890ff;
}

.joint-table td.hint {
    color: #c8c8c8;
}

.preview {
    display: block;
    width: 415px;
    height: 283px;
}

.preview path,
.thumb path {
    shape-rendering: crispEdges;
}

.preview path.soft,
.thumb path.soft {
    shape-rendering: auto;
}

.serif {
    font-family: "Liberation Serif", serif;
}

.thin {
    font-family: "Noto Sans CJK SC", sans-serif;
    font-weight: 300;
}

.cad {
    font-family: "Noto Sans CJK SC", sans-serif;
    fill: #0ff;
}

.cad.dim {
    fill: #007070;
}

.tile-box {
    height: 459px;
    margin-top: 5px;
    border: 1px solid #c8c8c8;
}

.tile-grid {
    display: grid;
    grid-template-columns: 151px 151px;
    grid-auto-rows: 151px;
    width: 302px;
}

.tile {
    padding: 5px;
    border-right: 1px solid #d8d8d8;
    border-bottom: 1px solid #d8d8d8;
}

.tile:nth-child(odd) {
    box-shadow: inset 1px 0 0 #ddd;
}

.tile.selected {
    box-shadow: inset 0 0 0 2px #808080, inset 0 0 0 3px #7cc4ff, inset 0 0 0 5px #1296f0;
    border-color: #808080;
}

.thumb {
    display: block;
    width: 140px;
    height: 140px;
}

/* Bottom options */
.gen-title {
    display: flex;
    align-items: center;
    gap: 6px;
    height: 18px;
    margin-top: 6px;
    line-height: 20px;
    color: #444;
}

.gen-title::after {
    content: "";
    flex: 1;
    border-top: 1px solid #ccc;
}

.gen-row {
    display: flex;
    align-items: center;
    padding-left: 21px;
}

.radios {
    height: 18px;
    margin-top: 4px;
    line-height: 20px;
}

.radio {
    display: flex;
    align-items: center;
    gap: 3px;
    width: 153px;
}

.radio::before {
    content: "";
    width: 14px;
    height: 14px;
    background-color: #fff;
    border: 1px solid #888;
    border-radius: 50%;
}

.radio.checked::before {
    background: radial-gradient(circle, #2f80e0 0, #2f80e0 3px, #fff 3.5px);
}

.options {
    height: 26px;
    margin-top: 6px;
}

.check {
    display: flex;
    align-items: center;
    gap: 3px;
    width: 152px;
    white-space: nowrap;
}

.check-ic {
    width: 14px;
    height: 14px;
    flex: none;
}

.range {
    display: flex;
    align-items: center;
    gap: 9px;
    white-space: nowrap;
}

.range-input {
    width: 100px;
    height: 26px;
    padding: 3px 3px;
    border: 1px solid #ccc;
    border-radius: 3px;
}

.dialog-foot {
    display: flex;
    align-items: center;
    gap: 6px;
    height: 41px;
    margin-top: 7px;
    padding-top: 7px;
    padding-bottom: 7px;
    line-height: 20px;
    border-top: 1px solid #ccc;
}

.note {
    flex: 1;
}

.btn {
    width: 80px;
    height: 26px;
    background-color: #fff;
    border: 1px solid #ccc;
    border-radius: 4px;
    font: inherit;
    color: #333;
}

.btn.primary {
    background-color: #2f80e0;
    border-color: #2f80e0;
    color: #fff;
}

/* Annotation layer */
.marks {
    position: absolute;
    left: 0;
    top: 0;
    width: 1170px;
    height: 747px;
    pointer-events: none;
}
```
